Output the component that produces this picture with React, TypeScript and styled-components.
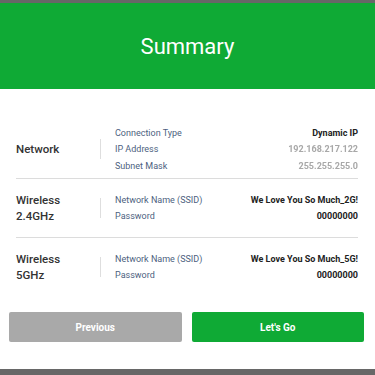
import { FC } from "react";
import styled, { createGlobalStyle } from "styled-components";

const GlobalStyle = createGlobalStyle`
  html, body {
    margin: 0;
    padding: 0;
    background-color: #676767;
    font-family: Roboto, "Liberation Sans", sans-serif;
  }
`;

const Page = styled.div`
  width: 375px;
  height: 375px;
  padding: 3px 0 6px;
  box-sizing: border-box;
  display: flex;
  flex-direction: column;
`;

const Card = styled.div`
  flex: 1;
  display: flex;
  flex-direction: column;
  background-color: #fff;
`;

const Header = styled.div`
  height: 86px;
  display: flex;
  align-items: center;
  justify-content: center;
  background-color: #0faa35;
`;

const Title = styled.h1`
  margin: 0;
  font-size: 22px;
  font-weight: 400;
  color: #fff;
`;

const Content = styled.div`
  display: flex;
  flex-direction: column;
  padding: 31px 17px 0 16px;
`;

const Section = styled.div<{ $last?: boolean }>`
  display: flex;
  align-items: center;
  height: 58px;
  border-bottom: 1px solid ${(p) => (p.$last ? "transparent" : "#dcdcdc")};
`;

const SectionTitle = styled.div`
  width: 84px;
  font-size: 11.5px;
  font-weight: 500;
  line-height: 16px;
  color: #333;
`;

const Divider = styled.div`
  width: 1px;
  height: 20px;
  margin-right: 14px;
  background-color: #dedede;
`;

const Details = styled.div`
  flex: 1;
  display: flex;
  flex-direction: column;
`;

const Line = styled.div<{ $tall?: boolean }>`
  display: flex;
  justify-content: space-between;
  align-items: center;
  height: ${(p) => (p.$tall ? "16.5px" : "15.5px")};
`;

const Label = styled.span`
  font-size: 9px;
  color: #4d5f80;
`;

const Value = styled.span<{ $hidden?: boolean }>`
  font-size: 9px;
  font-weight: 700;
  color: ${(p) => (p.$hidden ? "#a8a8a8" : "#222")};
  filter: ${(p) => (p.$hidden ? "blur(0.7px)" : "none")};
`;

const Actions = styled.div`
  display: grid;
  grid-template-columns: 1fr 1fr;
  gap: 10px;
  padding: 15px 11px 0 9px;
`;

const Button = styled.button<{ $primary?: boolean }>`
  height: 30px;
  border: none;
  border-radius: 2px;
  font-family: inherit;
  font-size: 10px;
  font-weight: 700;
  color: #fff;
  background-color: ${(p) => (p.$primary ? "#0faa35" : "#a9a9a9")};
  cursor: pointer;
`;

type Item = { label: string; value: string; hidden?: boolean };
type Group = { title: string[]; items: Item[] };

const groups: Group[] = [
  {
    title: ["Network"],
    items: [
      { label: "Connection Type", value: "Dynamic IP" },
      { label: "IP Address", value: "192.168.217.122", hidden: true },
      { label: "Subnet Mask", value: "255.255.255.0", hidden: true },
    ],
  },
  {
    title: ["Wireless", "2.4GHz"],
    items: [
      { label: "Network Name (SSID)", value: "We Love You So Much_2G!" },
      { label: "Password", value: "00000000" },
    ],
  },
  {
    title: ["Wireless", "5GHz"],
    items: [
      { label: "Network Name (SSID)", value: "We Love You So Much_5G!" },
      { label: "Password", value: "00000000" },
    ],
  },
];

const App: FC = () => {
  return (
    <Page>
      <GlobalStyle />
      <Card>
        <Header>
          <Title>Summary</Title>
        </Header>
        <Content>
          {groups.map((group, i) => (
            <Section key={i} $last={i === groups.length - 1}>
              <SectionTitle>
                {group.title.map((t) => (
                  <div key={t}>{t}</div>
                ))}
              </SectionTitle>
              <Divider />
              <Details>
                {group.items.map((item) => (
                  <Line key={item.label} $tall={group.items.length > 2}>
                    <Label>{item.label}</Label>
                    <Value $hidden={item.hidden}>{item.value}</Value>
                  </Line>
                ))}
              </Details>
            </Section>
          ))}
        </Content>
        <Actions>
          <Button>Previous</Button>
          <Button $primary>Let's Go</Button>
        </Actions>
      </Card>
    </Page>
  );
};

export default App;
